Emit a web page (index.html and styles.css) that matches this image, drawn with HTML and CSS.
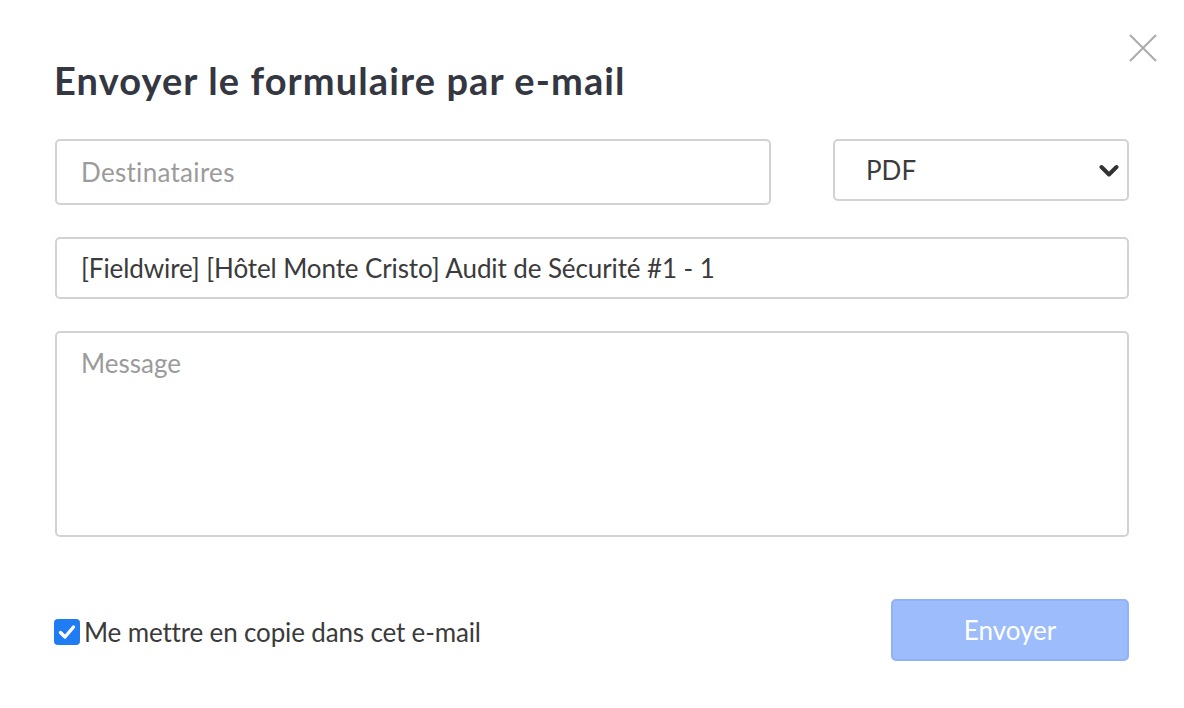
FILE: index.html
```html
<!DOCTYPE html>
<html lang="fr">
<head>
<meta charset="utf-8">
<title>Envoyer le formulaire par e-mail</title>
<link rel="stylesheet" href="styles.css">
</head>
<body>
<div class="dialog">
  <button class="close" aria-label="Fermer">
    <svg width="28" height="28" viewBox="0 0 28 28"><path d="M1 1 L27 27 M27 1 L1 27" stroke="#ababab" stroke-width="2" fill="none"/></svg>
  </button>
  <h1 class="title">Envoyer le formulaire par e-mail</h1>
  <div class="row">
    <input class="field recipients" type="text" placeholder="Destinataires">
    <div class="select">
      <span>PDF</span>
      <svg class="chev" width="20" height="14" viewBox="0 0 20 14"><path d="M2.5 3 L10 10.5 L17.5 3" stroke="#333" stroke-width="4" fill="none" stroke-linecap="round" stroke-linejoin="round"/></svg>
    </div>
  </div>
  <input class="field subject" type="text" value="[Fieldwire] [Hôtel Monte Cristo] Audit de Sécurité #1 - 1">
  <textarea class="field message" placeholder="Message"></textarea>
  <div class="footer">
    <label class="check">
      <span class="box"><svg width="18" height="16" viewBox="0 0 18 16"><path d="M2.5 8.5 L7 13 L15.5 3" stroke="#fff" stroke-width="3.4" fill="none" stroke-linecap="round" stroke-linejoin="round"/></svg></span>
      <span class="label">Me mettre en copie dans cet e-mail</span>
    </label>
    <button class="send">Envoyer</button>
  </div>
</div>
</body>
</html>
```
FILE: styles.css
```css
* { box-sizing: border-box; }
html, body { margin: 0; padding: 0; background: #fff; }
body { font-family: Lato, "Open Sans", sans-serif; color: #3b3b3b; }
.dialog { position: relative; width: 1184px; height: 708px; padding: 58px 55px 0 55px; display: flex; flex-direction: column; }
.close { position: absolute; top: 34px; right: 27px; width: 28px; height: 28px; padding: 0; border: 0; background: none; }
.close svg { display: block; }
.title { margin: 0 0 0 -1px; font-size: 38px; line-height: 44px; font-weight: 700; color: #343741; letter-spacing: 1.1px; }
.row { display: flex; align-items: flex-start; gap: 62px; margin-top: 37px; }
.field { display: block; font-family: Lato, sans-serif; font-size: 26px; color: #3b3b3b; border: 2px solid #d2d2d2; border-radius: 5px; background: #fff; padding: 0 24px; outline: none; }
.field::placeholder { color: #9b9b9b; }
.recipients { width: 716px; height: 66px; letter-spacing: 0.3px; }
.select { width: 296px; height: 62px; border: 2px solid #d2d2d2; border-radius: 5px; display: flex; align-items: center; justify-content: space-between; padding: 0 8px 0 31px; font-size: 26px; color: #3b3b3b; }
.chev { display: block; margin-top: 1px; }
.subject { width: 100%; height: 62px; margin-top: 32px; letter-spacing: -0.1px; }
.message { width: 100%; height: 206px; margin-top: 32px; padding-top: 14px; resize: none; line-height: 32px; }
.footer { display: flex; justify-content: space-between; align-items: center; margin-top: 62px; }
.check { display: flex; align-items: center; gap: 4px; font-size: 26px; color: #3b3b3b; margin-left: -1px; margin-top: 3px; letter-spacing: -0.15px; }
.box { width: 26px; height: 26px; border-radius: 4px; background: #1f7cf3; display: flex; align-items: center; justify-content: center; }
.box svg { display: block; }
.send { width: 238px; height: 62px; border: 2px solid #92b2f8; border-radius: 5px; background: #9dbcfb; color: #fff; font-family: Lato, sans-serif; font-size: 26px; padding: 0; }
```
